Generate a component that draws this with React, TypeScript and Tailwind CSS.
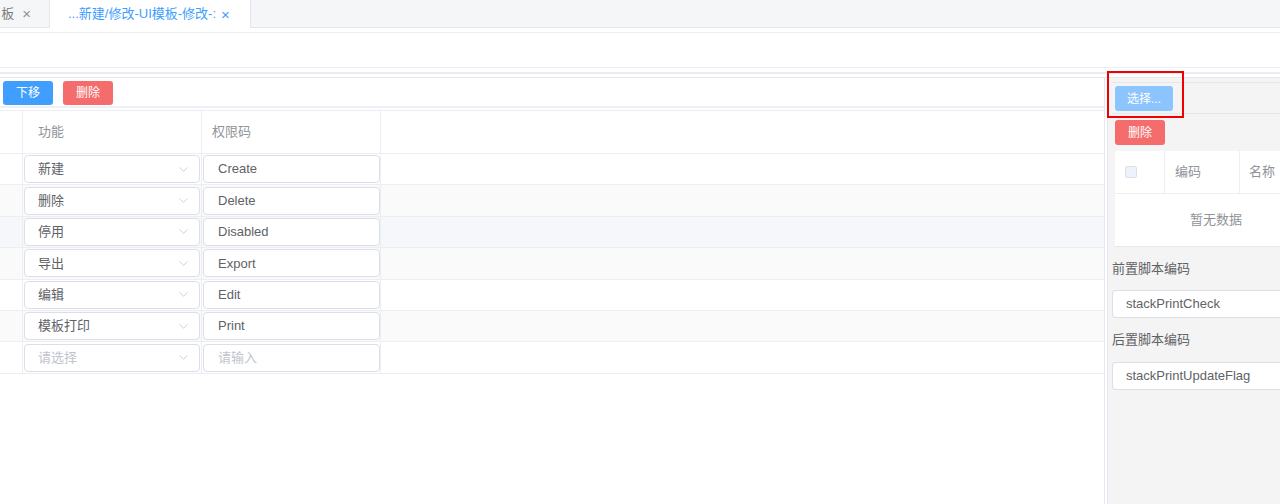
import React from "react";
import { ChevronDown } from "lucide-react";

type Row = { func: string; code: string };

const ROWS: Row[] = [
  { func: "新建", code: "Create" },
  { func: "删除", code: "Delete" },
  { func: "停用", code: "Disabled" },
  { func: "导出", code: "Export" },
  { func: "编辑", code: "Edit" },
  { func: "模板打印", code: "Print" },
];

const FONT = {
  fontFamily: '"Liberation Sans", "Noto Sans CJK SC", sans-serif',
};

function SelectBox({ value, placeholder }: { value?: string; placeholder?: string }) {
  return (
    <div className="h-[28px] w-full flex items-center justify-between rounded-[4px] border border-[#dcdfe6] bg-white pl-[13px] pr-[8px] text-[13px]">
      <span className={value ? "text-[#606266]" : "text-[#c0c4cc]"}>{value ?? placeholder}</span>
      <ChevronDown size={15} strokeWidth={1.25} className="text-[#c0c4cc]" />
    </div>
  );
}

function TextBox({ value, placeholder }: { value?: string; placeholder?: string }) {
  return (
    <div className="h-[28px] w-full flex items-center rounded-[4px] border border-[#dcdfe6] bg-white pl-[14px] text-[13px]">
      <span className={value ? "text-[#606266]" : "text-[#c0c4cc]"}>{value ?? placeholder}</span>
    </div>
  );
}

function TableRow({ row, index }: { row?: Row; index: number }) {
  // striped rows + the hovered one (停用)
  const bg = index === 2 ? "bg-[#f5f7fa]" : index % 2 === 1 ? "bg-[#fafafa]" : "bg-white";
  return (
    <div className={`flex h-[31.4px] border-b border-[#ebeef5] ${bg}`}>
      <div className="w-[23px] border-r border-[#ebeef5]" />
      <div className="w-[179px] border-r border-[#ebeef5] flex items-center px-[1px]">
        <SelectBox value={row?.func} placeholder="请选择" />
      </div>
      <div className="w-[179px] border-r border-[#ebeef5] flex items-center pl-[1px]">
        <TextBox value={row?.code} placeholder="请输入" />
      </div>
      <div className="flex-1" />
    </div>
  );
}

export default function App() {
  return (
    <div className="relative w-[1280px] h-[504px] overflow-hidden bg-white flex flex-col" style={FONT}>
      {/* tabs */}
      <div className="h-[28px] flex bg-[#f5f6f8] border-b border-[#e4e7ed] text-[13px]">
        <div className="w-[50px] flex items-center justify-end gap-[8px] pr-[18px] border-r border-[#e4e7ed] text-[#909399]">
          <span className="text-[#7a7d82]">板</span>
          <span className="text-[15px] leading-none">×</span>
        </div>
        <div className="w-[201px] -mb-[1px] flex items-center pl-[18px] gap-[5px] bg-white border-r border-[#e4e7ed] text-[#409eff]">
          <span>...新建/修改-UI模板-修改-:</span>
          <span className="text-[15px] leading-none">×</span>
        </div>
        <div className="flex-1" />
      </div>

      {/* form strip */}
      <div className="h-[4px] bg-white" />
      <div className="h-[36px] border-y border-[#ebeef5] bg-white" />
      <div className="h-[4px] bg-white" />
      <div className="h-[2px] bg-[#ebecf0]" />
      <div className="h-[4px] bg-white border-b border-[#e4e7ed]" />

      {/* main */}
      <div className="flex-1 flex">
        <div className="w-[1104px] flex flex-col">
          <div className="h-[30px] flex items-center gap-[10px] pl-[3px] border-b-[2px] border-[#f0f1f4] pt-[2px]">
            <button className="h-[24px] w-[50px] rounded-[3px] bg-[#409eff] text-white text-[12px]">下移</button>
            <button className="h-[24px] w-[50px] rounded-[3px] bg-[#f56c6c] text-white text-[12px]">删除</button>
          </div>
          <div className="mt-[2px] border-t border-[#ebeef5]">
            <div className="flex h-[43px] border-b border-[#ebeef5] text-[13px] text-[#909399]">
              <div className="w-[23px] border-r border-[#ebeef5]" />
              <div className="w-[179px] border-r border-[#ebeef5] flex items-center pl-[15px]">功能</div>
              <div className="w-[179px] border-r border-[#ebeef5] flex items-center pl-[10px]">权限码</div>
              <div className="flex-1" />
            </div>
            {ROWS.map((r, i) => (
              <TableRow key={r.code} row={r} index={i} />
            ))}
            <TableRow index={6} />
          </div>
        </div>

        {/* right panel */}
        <div className="flex-1 flex border-l border-[#e4e7ed]">
          <div className="w-[2px] bg-white" />
          <div className="flex-1 bg-[#f4f4f4] border-l border-[#e4e7ed] flex flex-col pl-[4px] text-[13px]">
            <div className="border-t border-[#e4e7ed] mt-[4px] pt-[3px] pl-[3px] pb-[2px] border-b">
              <button className="h-[25px] w-[58px] rounded-[3px] bg-[#8cc4fd] text-white text-[12px]">选择...</button>
            </div>
            <div className="pl-[3px] pt-[6px]">
              <button className="h-[25px] w-[50px] rounded-[3px] bg-[#f56c6c] text-white text-[12px]">删除</button>
            </div>
            <div className="ml-[3px] mt-[6px] bg-white h-[96px] border-b border-[#e4e7ed]">
              <div className="flex h-[43px] border-b border-[#ebeef5] text-[#909399]">
                <div className="w-[50px] border-r border-[#ebeef5] flex items-center pl-[10px]">
                  <div className="w-[12px] h-[12px] rounded-[2px] border border-[#dcdfe6] bg-[#edf2fc]" />
                </div>
                <div className="w-[75px] border-r border-[#ebeef5] flex items-center pl-[10px]">编码</div>
                <div className="flex-1 flex items-center pl-[9px]">名称</div>
              </div>
              <div className="h-[52px] flex items-center pl-[75px] text-[#909399]">暂无数据</div>
            </div>
            <div className="mt-[11px] text-[#606266] h-[22px] leading-[22px]">前置脚本编码</div>
            <div className="mt-[10px] h-[28px] rounded-l-[4px] border border-r-0 border-[#dcdfe6] bg-white flex items-center pl-[13px] text-[#606266]">
              stackPrintCheck
            </div>
            <div className="mt-[11px] text-[#606266] h-[22px] leading-[22px]">后置脚本编码</div>
            <div className="mt-[11px] h-[28px] rounded-l-[4px] border border-r-0 border-[#dcdfe6] bg-white flex items-center pl-[13px] text-[#606266]">
              stackPrintUpdateFlag
            </div>
          </div>
        </div>
      </div>

      {/* annotation highlight */}
      <div className="absolute left-[1107px] top-[71px] w-[77px] h-[47px] border-2 border-[#f00000] pointer-events-none" />
    </div>
  );
}
